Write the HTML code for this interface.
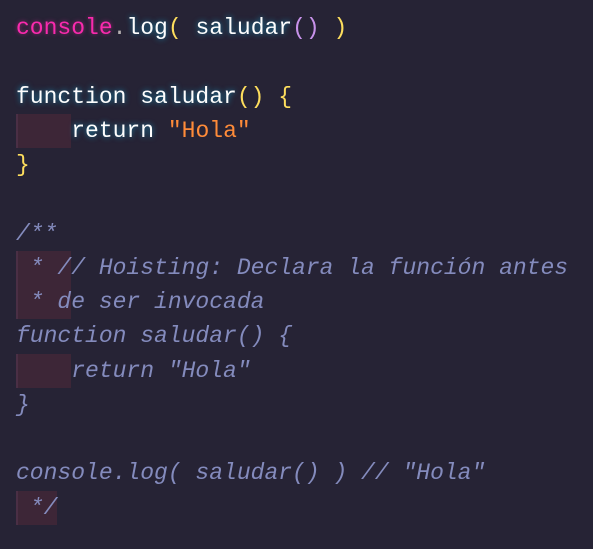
<!DOCTYPE html><html><head><style>
body{margin:0;width:593px;height:549px;background:#262335;overflow:hidden;font-family:"Liberation Mono",monospace;font-size:23px}
.c{position:absolute;left:16px;top:11px}
.l{height:34.25px;line-height:34.25px;white-space:pre;position:relative}
.w{color:#fdfdfd;text-shadow:0 0 6px #11c8ff99}
.p{color:#f92aad;text-shadow:0 0 4px #f92aad88}
.y{color:#fede5d}.v{color:#c792ea}.g{color:#b6b1b1}.o{color:#ff8b39}
.cm{color:#848bbd;font-style:italic}
.ind{position:absolute;left:0;top:0;width:55px;height:34px;background:#3d2637;border-left:2px solid #4a2f45;box-sizing:border-box}
.l span{position:relative}
</style></head><body><div class="c">
<div class="l"><span class="p">console</span><span class="g">.</span><span class="w">log</span><span class="y">(</span> <span class="w">saludar</span><span class="v">()</span> <span class="y">)</span></div>
<div class="l"></div>
<div class="l"><span class="w">function saludar</span><span class="y">()</span> <span class="y">{</span></div>
<div class="l"><div class="ind"></div>    <span class="w">return</span> <span class="o">"Hola"</span></div>
<div class="l"><span class="y">}</span></div>
<div class="l"></div>
<div class="l cm">/**</div>
<div class="l cm"><div class="ind"></div><span> * // Hoisting: Declara la función antes</span></div>
<div class="l cm"><div class="ind"></div><span> * de ser invocada</span></div>
<div class="l cm">function saludar() {</div>
<div class="l cm"><div class="ind"></div><span>    return "Hola"</span></div>
<div class="l cm">}</div>
<div class="l"></div>
<div class="l cm">console.log( saludar() ) // "Hola"</div>
<div class="l cm"><div class="ind" style="width:41px"></div><span> */</span></div>
</div></body></html>
